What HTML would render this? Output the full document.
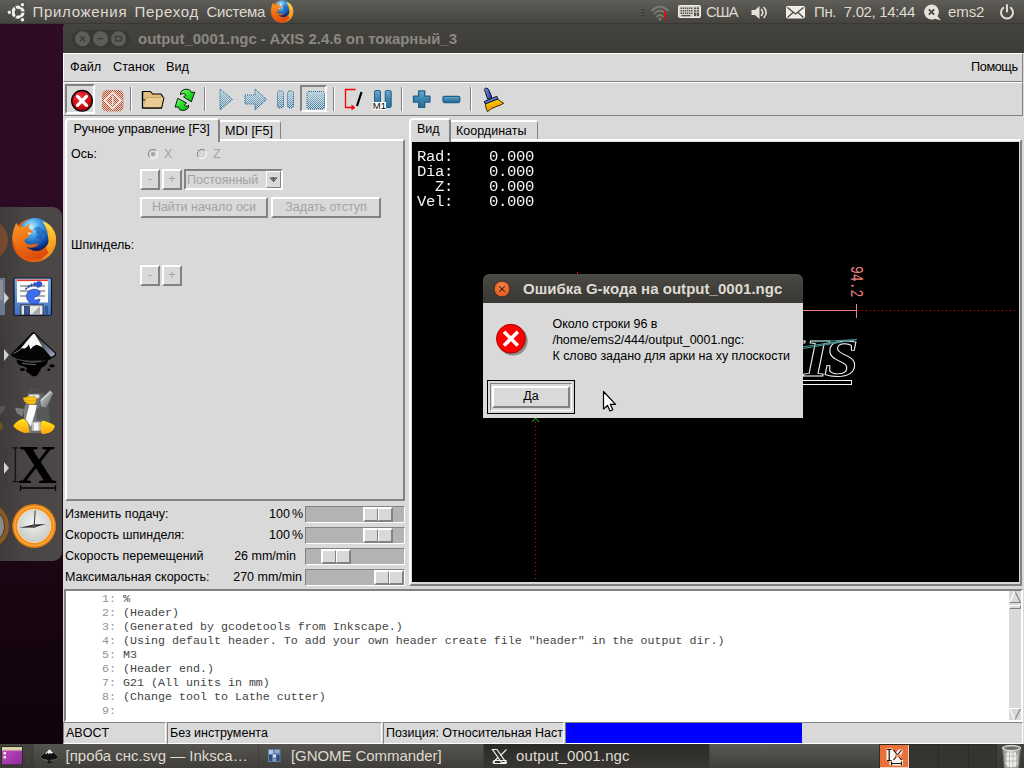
<!DOCTYPE html>
<html lang="ru">
<head>
<meta charset="utf-8">
<title>AXIS</title>
<style>
html,body{margin:0;padding:0;}
body{width:1024px;height:768px;overflow:hidden;position:relative;background:#2c0a22;font-family:"Liberation Sans",sans-serif;font-size:13px;color:#000;}
.abs{position:absolute;}
#desk{left:0;top:24px;width:64px;height:720px;background:linear-gradient(180deg,#2f0b26 0%,#2b0a22 30%,#21081a 60%,#160510 85%,#10030b 100%);}
#toppanel{left:0;top:0;width:1024px;height:24px;background:linear-gradient(180deg,#5f5e59 0%,#504f4a 50%,#45443f 94%,#33322e 100%);color:#dfdbd2;font-size:15px;}
#toppanel span{position:absolute;top:3px;white-space:nowrap;}
#botpanel{left:0;top:744px;width:1024px;height:24px;background:linear-gradient(180deg,#45443f 0%,#3a3935 100%);color:#dfdbd2;font-size:15px;}
#botpanel span{position:absolute;top:3px;white-space:nowrap;}
#titlebar{left:63px;top:24px;width:961px;height:29px;background:linear-gradient(180deg,#45443f 0%,#3c3b37 100%);border-top-left-radius:3px;}
#title{left:75px;top:6px;letter-spacing:-0.03px;color:#8a8880;font-weight:bold;font-size:15px;white-space:nowrap;}
#win{left:63px;top:53px;width:961px;height:691px;background:#d9d9d9;}
.t{position:absolute;white-space:nowrap;}

.m{font-size:12.7px;color:#000;}.tk{font-size:12.5px;color:#000;}
.tk{position:absolute;white-space:nowrap;line-height:14px;}
.dis{color:#a3a3a3;}
.raised{position:absolute;box-sizing:border-box;border:2px solid;border-color:#fff #828282 #828282 #fff;background:#d9d9d9;}
.sunken{position:absolute;box-sizing:border-box;border:2px solid;border-color:#828282 #fff #fff #828282;background:#d9d9d9;}
.btn{text-align:center;font-size:12.5px;color:#a3a3a3;line-height:16px;white-space:nowrap;}
.sep{position:absolute;top:5px;width:1px;height:24px;background:#828282;border-right:1px solid #fff;}
.tab{position:absolute;box-sizing:border-box;border:2px solid;border-color:#fff #828282 #d9d9d9 #fff;border-bottom:none;background:#d9d9d9;border-radius:4px 4px 0 0;font-size:12.5px;white-space:nowrap;}
.radio{width:10px;height:10px;border-radius:50%;border:1px solid;border-color:#828282 #fff #fff #828282;background:#d9d9d9;box-sizing:border-box;}
.radio i{position:absolute;left:2px;top:2px;width:4px;height:4px;border-radius:50%;background:#a3a3a3;}
#dro{position:absolute;left:5px;top:7.6px;margin:0;font-family:"Liberation Mono",monospace;font-size:15.6px;letter-spacing:-0.36px;line-height:17.3px;color:#f4f4f4;transform:scaleY(0.88);transform-origin:0 0;}
#gtext{position:absolute;left:1px;top:1px;margin:0;font-family:"Liberation Mono",monospace;font-size:11.67px;line-height:14px;color:#444;}
#gtext .ln{color:#949494;}
</style>
</head>
<body>
<svg width="0" height="0" style="position:absolute">
<defs>
<radialGradient id="ffglobe" cx="38%" cy="28%" r="75%"><stop offset="0" stop-color="#c9f0ff"/><stop offset="0.350" stop-color="#45a8ea"/><stop offset="0.750" stop-color="#1556b0"/><stop offset="1" stop-color="#0a2268"/></radialGradient>
<linearGradient id="fffox" x1="0" y1="0.600" x2="1" y2="0.400"><stop offset="0" stop-color="#e5550d"/><stop offset="0.450" stop-color="#e8620f"/><stop offset="0.800" stop-color="#f59a1e"/><stop offset="1" stop-color="#fdc535"/></linearGradient>
<linearGradient id="fftail" x1="0" y1="0" x2="0.300" y2="1"><stop offset="0" stop-color="#ffe95a"/><stop offset="0.500" stop-color="#fdc02a"/><stop offset="1" stop-color="#f0871a"/></linearGradient>
<linearGradient id="ffhead" x1="0.200" y1="0" x2="0.600" y2="1"><stop offset="0" stop-color="#f7941e"/><stop offset="0.500" stop-color="#ee6f12"/><stop offset="1" stop-color="#dc4a0c"/></linearGradient>
<symbol id="ff" viewBox="0 0 46 46">
<circle cx="23" cy="23.300" r="22.400" fill="url(#fffox)"/>
<circle cx="24.200" cy="16.900" r="16.500" fill="url(#ffglobe)"/>
<path d="M27 9c2.500 0.500 4 2 4.500 4c2 0 3.500 1.500 3.500 4c-2-1-3.500-0.500-4 1.500c1 2 0.500 4-1.500 5c-1-2-3-2.500-4.500-1.500c0-2 0.500-3.500 2-4.500c-2-1-2.500-3-1.500-5c-1.500 0-2.500 0.500-3.500 1.500c0.500-2.500 2.500-4.500 5-5z" fill="#1b56ad" opacity="0.550"/>
<path d="M18 28c3 3 8 4 13 2.500c2-0.500 3.500-1.500 5-3c-1 4-4 6.500-9 7c-5 0.500-8.500-2-9-6.500z" fill="#0a1f66" opacity="0.850"/>
<path d="M31.500 3.500Q40 6.500 44 14.500Q47.500 23 43.500 32Q40 39 33 42.500Q37 37 36.800 31Q38.500 25 37.300 19Q36.500 11 31.500 3.500Z" fill="url(#fftail)"/>
<path d="M34 8l4 7M36.500 12l3.500 9M38.500 20l1.500 8" stroke="#f49a1a" stroke-width="0.800" fill="none" opacity="0.800"/>
<path d="M4.900 5.700L8 10.500Q11 8.500 14.500 9.500L18.400 6L17.500 11.500Q20.500 12 22.200 15.200L18.500 17.200Q17 18.500 17.600 20.500Q13.500 21 13.200 24.500Q16 28.500 21 27.500Q25 27 27.700 26.300Q26 30 21 30.800Q17 31 15 30Q20 35.500 28 34.500Q32 33.500 34.500 30.500L38 36L30 43L16 43L5 33L0.800 21Q1.500 12 4.900 5.700Z" fill="url(#ffhead)"/>
<path d="M16.500 15.300l4.300 0.300l-2.600 1.700q-1.500 0.200-1.700-2z" fill="#fff1dc"/>
</symbol>
</defs></svg>
<div id="desk" class="abs"></div>
<div id="dock" class="abs" style="left:0;top:207px;width:62px;height:354px;background:linear-gradient(90deg,#3f3b3a 0%,#494544 40%,#4c4847 100%);border-radius:0 9px 9px 0;overflow:hidden">
<svg width="62" height="354" style="position:absolute;left:0;top:0">
<defs>
<linearGradient id="flp" x1="0" y1="0" x2="0" y2="1"><stop offset="0" stop-color="#7fb0e8"/><stop offset="1" stop-color="#3f6fb8"/></linearGradient>
<radialGradient id="clk" cx="50%" cy="40%" r="60%"><stop offset="0" stop-color="#f2f4f1"/><stop offset="1" stop-color="#c6cac5"/></radialGradient>
<linearGradient id="ink" x1="0" y1="0" x2="0" y2="1"><stop offset="0" stop-color="#555"/><stop offset="0.500" stop-color="#111"/><stop offset="1" stop-color="#000"/></linearGradient>
</defs>
<!-- ghost icons at far left -->
<circle cx="-13" cy="33" r="21" fill="#7a4a2c" opacity="0.900"/>
<rect x="-20" y="71" width="25" height="37" fill="#6b7890"/>
<rect x="-20" y="73" width="23" height="20" fill="#8d8d95"/>
<path d="M-10 147l14-18v36z" fill="#3a3838"/>
<path d="M-4 214q5-1 7 5q1 3-4 5h-6z" fill="#6a5a24" opacity="0.900"/>
<path d="M-4 199h9q0 6-6 9h-4z" fill="#575554"/>
<rect x="4.800" y="241" width="1.200" height="34" fill="#3c3939"/><rect x="2" y="240.500" width="6" height="1.200" fill="#3c3939"/><rect x="2" y="274" width="6" height="1.200" fill="#3c3939"/>
<circle cx="-14" cy="319" r="21" fill="none" stroke="#8a5a22" stroke-width="4"/><circle cx="-14" cy="319" r="18" fill="#8d8a86"/>
<!-- little arrows -->
<path d="M4 85v12l5-6z" fill="#cfcfcf"/><path d="M4 142v12l5-6z" fill="#cfcfcf"/><path d="M4 255v12l5-6z" fill="#cfcfcf"/>
<!-- firefox -->
<use href="#ff" x="11" y="10.500" width="46" height="45"/>
<!-- floppy / gnome save -->
<rect x="14" y="71" width="37.500" height="37.500" rx="1.500" fill="url(#flp)" stroke="#10182c" stroke-width="1.200"/>
<rect x="17" y="72.500" width="31" height="23" fill="#fafafa"/>
<rect x="17" y="72.500" width="31" height="1.600" fill="#e23a2a"/>
<path d="M20 79h25M20 84h25M20 89h25" stroke="#333" stroke-width="0.800"/>
<path d="M37 75c3-1 5 0 5 2c0 2-3 4-5 3c-1-1-1-4 0-5z M33.500 76.500c1-1.500 2.500-1 2.500 0.500c0 1.500-1.500 2.500-2.500 1.500z M30.500 77.500c1-1 2-0.500 2 0.500s-1.300 2-2 1.200z M27.800 79c0.800-0.800 1.800-0.400 1.700 0.600c-0.100 1-1.200 1.600-1.700 1z M25.500 81c0.700-0.600 1.500-0.200 1.400 0.600c-0.100 0.800-1 1.200-1.400 0.700z" fill="#2a55d8" stroke="#0a2a9a" stroke-width="0.500"/>
<path d="M29 84c4-3 10-2 11 1c1 3-3 4-5 5c-2 1-1 3 1 3c2 0 2-1.500 3.500-1c1 2-1 5-5 5c-5 0-8-4-8-8c0-2 1-4 2.500-5z" fill="#3e6ef0" stroke="#0a2a9a" stroke-width="0.600"/>
<rect x="21" y="98" width="22" height="10" fill="#e8e8e8" stroke="#10182c" stroke-width="0.800"/>
<rect x="24.500" y="99.500" width="5" height="8" fill="#31579a" stroke="#10182c" stroke-width="0.600"/>
<path d="M32 107l8-8v8z" fill="#a9a9a9"/>
<rect x="45" y="99" width="3" height="9" fill="#31579a"/>
<!-- inkscape -->
<path d="M32 125.800Q33.300 124.300 34.700 125.800L55.800 145.800Q57 147.400 55.500 148.900L49.500 152.800Q44 154.300 40 153.500L30 153.800Q22 153.300 17 151.800L12 149.300Q10.300 147.800 11.600 146.200Z" fill="#050505"/>
<defs><linearGradient id="inkr" x1="0" y1="0" x2="1" y2="1"><stop offset="0" stop-color="#23242a"/><stop offset="0.600" stop-color="#6c7288"/><stop offset="1" stop-color="#a4aabc"/></linearGradient></defs><path d="M34.800 127.300L54.800 146.300Q55.300 147.300 54.300 148.200L51 150L42.500 140.300L40 139L36.500 137.800Z" fill="url(#inkr)"/>
<path d="M33.300 126.800L21 141.300L25 141.600L27.200 139.800L28.700 137.600L30.600 142.200L33 139.500L36.500 137.800L40 139L42.500 140.300L35 127.300Z" fill="#f6f6f6"/>
<path d="M13.500 146.500L20.500 142.500L31.500 128.500" stroke="#cfd2da" stroke-width="0.700" fill="none" opacity="0.800"/>
<path d="M16.500 152.500Q27 156.500 36 155.500Q44 155 48 152.500Q47.500 157.500 44 159.500Q40.500 160.500 40.500 163.500Q38.500 165 38 167.500Q34.500 170.800 31 168.300Q29.500 165.800 27 165.300Q24.800 163.300 27.300 161.300Q25 159.300 20 158.300Q17 157 16.500 152.500Z" fill="#000"/>
<path d="M22 156.300c5 1 10 0.800 14 1.400" stroke="#9a9a9a" stroke-width="1" fill="none" opacity="0.700"/>
<ellipse cx="22.500" cy="162.500" rx="2.600" ry="1.600" fill="#000"/><ellipse cx="52" cy="158.800" rx="2.800" ry="1.600" fill="#000"/><ellipse cx="48.700" cy="162.700" rx="1.500" ry="1.200" fill="#000"/>
<!-- penguin -->
<defs><linearGradient id="pgb" x1="0" y1="0" x2="1" y2="0"><stop offset="0" stop-color="#808182"/><stop offset="0.550" stop-color="#6a6b6c"/><stop offset="1" stop-color="#474849"/></linearGradient><linearGradient id="pgt" x1="0" y1="0" x2="1" y2="1"><stop offset="0" stop-color="#e2e2e2"/><stop offset="0.500" stop-color="#9b9c9d"/><stop offset="1" stop-color="#5c5d5e"/></linearGradient><linearGradient id="pgf" x1="0" y1="0" x2="0" y2="1"><stop offset="0" stop-color="#ffe31a"/><stop offset="1" stop-color="#fca311"/></linearGradient></defs>
<path d="M15 200.500L24 202L22.500 209.700L16.700 206.300Z" fill="#7c7d7e"/>
<path d="M35.800 181Q30 181 28 187L27.500 193L24.500 200Q23.500 206 24 212L26 222L30 226H44L50 222Q52 217 51.500 212L50 200L46 192L43.500 186Q40 181.500 35.800 181Z" fill="url(#pgb)"/>
<path d="M29 185.500Q32 181 36 181Q41 181.500 43 186L29 187.500Z" fill="#48494a"/>
<rect x="28.300" y="187.300" width="11.200" height="4.200" rx="2" fill="#e4e6e8" stroke="#8e9092" stroke-width="0.700"/><path d="M33.800 187.500v4" stroke="#8e9092" stroke-width="0.700"/>
<path d="M29.200 198H36.700L35 206.300L30.800 219.700L25.800 212Z" fill="#fbfbfb"/>
<path d="M40 193L50 183L53.300 186.300L46.700 200.500H40.800Z" fill="url(#pgt)" stroke="#555657" stroke-width="0.500"/>
<path d="M41 193.500L51 185" stroke="#f4f4f4" stroke-width="0.900"/>
<path d="M36.500 203L41 199L48 203L50 214L44 216L37 213Z" fill="#58595a"/>
<rect x="31.700" y="214.700" width="9.100" height="9" fill="#bfc0c1"/><rect x="34" y="216" width="4.500" height="7.500" fill="#f6f6f6"/>
<path d="M23 191Q29 188.300 36 190.300Q37.300 195 34 197.300Q28 197.800 24.500 194.500Z" fill="#fcc21a" stroke="#c88a08" stroke-width="0.500"/><path d="M24.500 193Q30 195 36.300 193.500" stroke="#d8920a" stroke-width="0.600" fill="none"/>
<path d="M13.300 218.800Q17 213.500 23.300 211.800Q27.500 214 28.300 218L29.600 225.500Q25 226.500 21.700 225Q16 223 13.300 218.800Z" fill="url(#pgf)"/>
<path d="M41.700 213.800Q44 213.500 46.700 214.700Q52 216 55 218.800Q54 223.500 50 225.500Q45 227.500 41.700 226.700Q40 223 40.400 219.700Z" fill="url(#pgf)"/>
<!-- X icon -->
<rect x="14.700" y="240.500" width="1.400" height="34.500" fill="#151515"/><rect x="12.300" y="240.300" width="6.200" height="1.300" fill="#151515"/><rect x="12.300" y="274" width="6.200" height="1.300" fill="#151515"/>
<text x="18" y="276" font-family="Liberation Serif, serif" font-weight="bold" font-size="54" fill="#000" textLength="39" lengthAdjust="spacingAndGlyphs">X</text>
<path d="M20.500 281h35M20.500 278.300v5.500M55.500 278.300v5.500" stroke="#000" stroke-width="1.300" fill="none"/>
<!-- clock -->
<circle cx="34.200" cy="319" r="21.800" fill="#f28a1c"/><circle cx="34.200" cy="319" r="21.300" fill="none" stroke="#d87408" stroke-width="1"/><circle cx="34.200" cy="319" r="19.500" fill="none" stroke="#f9a840" stroke-width="1.500"/>
<circle cx="34.200" cy="319" r="16.600" fill="url(#clk)" stroke="#fbd9a8" stroke-width="1"/>
<path d="M34.200 319l1-15.500" stroke="#3a3a3a" stroke-width="1"/><path d="M19.200 320.800L34 317.500L45.800 317L34.400 320.600Z" fill="#2c2c2c"/><circle cx="34.200" cy="319" r="2" fill="#555"/>
</svg>
</div>
<div id="toppanel" class="abs">
<svg class="abs" style="left:6px;top:1px" width="24" height="22"><circle cx="12" cy="11.200" r="5" fill="none" stroke="#f2f1ec" stroke-width="3.200"/><g stroke="#504f4a" stroke-width="1.300"><path d="M12 11.200L22 11.200M12 11.200L7 2.500M12 11.200L7 19.900"/></g><g fill="#f2f1ec" stroke="#504f4a" stroke-width="1.100"><circle cx="3.300" cy="11.200" r="2.300"/><circle cx="16.400" cy="3.700" r="2.300"/><circle cx="16.400" cy="18.700" r="2.300"/></g></svg>
<span style="left:32.5px;letter-spacing:0.7px">Приложения</span>
<span style="left:134.5px;letter-spacing:0.7px">Переход</span>
<span style="left:206.5px;letter-spacing:-0.25px">Система</span>
<svg class="abs" style="left:270px;top:0" width="24" height="23"><use href="#ff" x="0" y="0" width="24" height="23"/></svg>
<!-- applet handle -->
<svg class="abs" style="left:641px;top:8px" width="5" height="10"><path d="M0 1.500h4M0 4.500h4M0 7.500h4" stroke="#3a3935" stroke-width="1"/></svg>
<!-- wifi -->
<svg class="abs" style="left:650px;top:4px" width="20" height="18"><g fill="none" stroke="#7d7b75" stroke-width="1.800" stroke-linecap="round"><path d="M2 6.500c5-5 11-5 16 0"/><path d="M4.500 9.500c3.500-3.500 7.500-3.500 11 0"/><path d="M7 12.500c2-2 4-2 6 0"/></g><circle cx="10" cy="15" r="1.500" fill="#7d7b75"/><rect x="14" y="7" width="2" height="6" fill="#e01010"/><rect x="14" y="14" width="2" height="2" fill="#e01010"/></svg>
<!-- keyboard -->
<svg class="abs" style="left:678px;top:5px" width="24" height="14"><rect x="0.500" y="0.500" width="22" height="12" rx="1" fill="#d8d6cf" stroke="#efede6"/><g fill="#55534e"><rect x="2.500" y="2.500" width="12" height="1.500"/><rect x="2.500" y="5" width="12" height="1.500"/><rect x="2.500" y="7.500" width="12" height="1.500"/><rect x="3.500" y="10" width="9" height="1.300"/><rect x="16" y="2.500" width="5" height="1.500"/><rect x="16" y="5" width="5" height="1.500"/><rect x="16" y="7.500" width="5" height="3.500"/></g><g stroke="#d8d6cf" stroke-width="0.700"><path d="M4.500 2v8M6.500 2v8M8.500 2v8M10.500 2v8M12.500 2v8M18.500 2v9"/></g><rect x="19" y="1.500" width="2" height="1" fill="#6fbf4a"/></svg>
<span style="left:706px;letter-spacing:-1.100px">США</span>
<!-- speaker -->
<svg class="abs" style="left:751px;top:5px" width="18" height="15"><path d="M0.500 5h3.500l4.500-4v13l-4.500-4h-3.500z" fill="#e6e3da"/><path d="M10.500 4.500c1.500 1.800 1.500 4.200 0 6" stroke="#e6e3da" stroke-width="1.600" fill="none" stroke-linecap="round"/><path d="M13 2.500c2.800 3 2.800 7 0 10" stroke="#e6e3da" stroke-width="1.600" fill="none" stroke-linecap="round"/></svg>
<!-- mail -->
<svg class="abs" style="left:786px;top:6px" width="20" height="13"><rect x="0.500" y="0.500" width="18" height="11.500" rx="1" fill="#eeebe2" stroke="#f6f4ee"/><path d="M1.500 1.500l8 6.500l8-6.500M1.500 11.500l6-5.500M17.500 11.500l-6-5.500" stroke="#45443f" stroke-width="1.200" fill="none"/></svg>
<span style="left:814px;letter-spacing:-0.35px;white-space:pre">Пн.  7.02, 14:44</span>
<!-- chat bubble -->
<svg class="abs" style="left:923px;top:4px" width="20" height="17"><path d="M8.500 0.500a7.500 7.500 0 1 0 3.500 14.200l6 1.500l-3.500-4a7.500 7.500 0 0 0-6-11.700z" fill="#e6e3da"/><path d="M5.800 5.300l5.400 5.400M11.200 5.300l-5.400 5.400" stroke="#45443f" stroke-width="1.700"/></svg>
<span style="left:948px;letter-spacing:-0.1px">ems2</span>
<!-- power -->
<svg class="abs" style="left:999px;top:4px" width="16" height="16"><path d="M4.300 3.800a6 6 0 1 0 7.400 0" fill="none" stroke="#e6e3da" stroke-width="1.900" stroke-linecap="round"/><path d="M8 1v6.500" stroke="#e6e3da" stroke-width="1.900" stroke-linecap="round"/></svg>
</div>
<div id="titlebar" class="abs"><svg class="abs" style="left:8px;top:5px" width="60" height="20"><rect x="1" y="1" width="58" height="18" rx="9" fill="#393834"/><g fill="#5f5d57"><circle cx="11.500" cy="9.700" r="7.500"/><circle cx="29.500" cy="9.700" r="7.500"/><circle cx="47.500" cy="9.700" r="7.500"/></g><g stroke="#3c3b37" stroke-width="1.300" fill="none"><path d="M9 7.200l5 5M14 7.200l-5 5"/><path d="M26.500 9.700h6"/><rect x="44.500" y="7.500" width="6" height="4.500"/></g></svg><div id="title" class="abs">output_0001.ngc - AXIS 2.4.6 on токарный_3</div></div>
<div id="win" class="abs">
<!-- menubar -->
<div class="abs" style="left:0;top:0;width:960px;height:29px;border-top:1px solid #fff;border-bottom:1px solid #828282;border-right:1px solid #828282;border-left:1px solid #fff;box-sizing:border-box"></div>
<div class="t m" style="left:7px;top:7px">Файл</div>
<div class="t m" style="left:50px;top:7px">Станок</div>
<div class="t m" style="left:103px;top:7px">Вид</div>
<div class="t m" style="left:908px;top:7px;letter-spacing:-0.4px">Помощь</div>
<!-- toolbar -->
<div class="abs" style="left:0;top:29px;width:960px;height:34px;border-top:1px solid #fff;border-bottom:1px solid #828282;border-right:1px solid #828282;border-left:1px solid #fff;box-sizing:border-box"></div>
<div id="toolbar" class="abs" style="left:0;top:29px;width:961px;height:34px">
<div class="sunken" style="left:2px;top:2px;width:30px;height:30px"></div>
<div class="sunken" style="left:237px;top:3px;width:27px;height:27px"></div>
<div class="sep" style="left:67px"></div><div class="sep" style="left:141px"></div><div class="sep" style="left:270px"></div><div class="sep" style="left:338px"></div><div class="sep" style="left:407px"></div>
<svg width="961" height="34" style="position:absolute;left:0;top:0">
<defs>
<pattern id="stp" width="2" height="2" patternUnits="userSpaceOnUse"><rect width="2" height="2" fill="#fff"/><rect x="0" y="0" width="1" height="1" fill="#000"/><rect x="1" y="1" width="1" height="1" fill="#000"/></pattern>
<mask id="stm"><rect width="961" height="34" fill="url(#stp)"/></mask>
<radialGradient id="rg" cx="40%" cy="30%" r="75%"><stop offset="0" stop-color="#f0303a"/><stop offset="0.600" stop-color="#d40f18"/><stop offset="1" stop-color="#a80008"/></radialGradient>
<linearGradient id="bl" x1="0" y1="0" x2="0" y2="1"><stop offset="0" stop-color="#a6d4e4"/><stop offset="1" stop-color="#2f78a4"/></linearGradient>
<linearGradient id="bl2" x1="0" y1="0" x2="0" y2="1"><stop offset="0" stop-color="#6fabcb"/><stop offset="0.500" stop-color="#3f84ad"/><stop offset="1" stop-color="#2c6f99"/></linearGradient>
<linearGradient id="gr" x1="0" y1="0" x2="1" y2="1"><stop offset="0" stop-color="#8cff8c"/><stop offset="0.450" stop-color="#2ee02e"/><stop offset="1" stop-color="#06b406"/></linearGradient>
</defs>
<!-- estop -->
<circle cx="19" cy="18.800" r="10.300" fill="url(#rg)" stroke="#000" stroke-width="1.300"/>
<path d="M14.500 14.300l9 9M23.500 14.300l-9 9" stroke="#fff" stroke-width="3.200" stroke-linecap="round"/>
<!-- power (disabled, stippled) -->
<g mask="url(#stm)"><rect x="39" y="8" width="21.500" height="21.500" rx="5" fill="#c44a26"/></g>
<path d="M49.700 10.500l8 8l-8 8l-8-8z" fill="none" stroke="#f6ece6" stroke-width="2.200" opacity="0.900"/>
<path d="M49.700 14v9" stroke="#f6ece6" stroke-width="1.600" opacity="0.800"/>
<!-- folder -->
<path d="M79.500 9.500h8l2 2.500h8.500l2 3v3h-20.500z" fill="#e3bd7c" stroke="#000" stroke-width="1.200" stroke-linejoin="round"/>
<path d="M79.500 9.500v16.500h19" fill="none" stroke="#000" stroke-width="1.300"/>
<path d="M83 15.500h18l-2.500 11h-18.500z" fill="#eccb92" stroke="#b9975e" stroke-width="0.600"/>
<path d="M98.500 26.500l2.500-11" stroke="#000" stroke-width="1"/>
<path d="M80 26h18.500" stroke="#000" stroke-width="1.300"/>
<!-- reload -->
<path d="M117.300 12.400Q117.200 9.500 120 8Q123.500 6.300 126.500 7.900Q128 9 128.500 10.400L131.800 10.200L128.300 19.800L120.500 14.900L122.600 13.300Q122.600 12 121.500 11.700Q119.500 11.500 117.300 12.400z" fill="url(#gr)" stroke="#0a1e0a" stroke-width="1" stroke-linejoin="round"/>
<path d="M125.900 23.300Q126 26.200 123.200 27.700Q119.700 29.400 116.700 27.800Q115.900 26.500 115.400 25L112.100 25L114.800 16.300L123.600 21.100L121.500 22.700Q121.500 24 122.600 24.300Q124 24.300 125.900 23.300z" fill="url(#gr)" stroke="#0a1e0a" stroke-width="1" stroke-linejoin="round"/>
<!-- play / step / pause / stop (stippled) -->
<g mask="url(#stm)">
<path d="M157 7l12.500 10.500l-12.500 10.500z" fill="url(#bl)" />
<path d="M182 13h10v-6l11.500 10.500l-11.500 10.500v-6h-10z" fill="url(#bl)"/>
<rect x="214.500" y="9" width="6" height="17" rx="2" fill="url(#bl)"/>
<rect x="224.500" y="9" width="6" height="17" rx="2" fill="url(#bl)"/>
<rect x="244" y="9.500" width="17.500" height="17.500" rx="2" fill="url(#bl)"/>
</g>
<g fill="none" stroke="#1f5f8c" stroke-width="1" stroke-dasharray="1 1">
<path d="M157 7l12.500 10.500l-12.500 10.500z"/>
<path d="M182 13h10v-6l11.500 10.500l-11.500 10.500v-6h-10z"/>
<rect x="214.500" y="9" width="6" height="17" rx="2"/>
<rect x="224.500" y="9" width="6" height="17" rx="2"/>
<rect x="244" y="9.500" width="17.500" height="17.500" rx="2"/>
</g>
<!-- red bracket and slash -->
<path d="M292.500 7.500h-10v18h7.500" fill="none" stroke="#ff0000" stroke-width="1.300"/>
<path d="M292.500 25.500l-4-3v6z" fill="#ff0000"/>
<path d="M298.500 10l-4.500 14" stroke="#000" stroke-width="2.200"/>
<!-- M1 -->
<rect x="311.500" y="8.500" width="6" height="17" rx="1.500" fill="url(#bl2)" stroke="#1f5f8c"/>
<rect x="322.200" y="8.500" width="6" height="17" rx="1.500" fill="url(#bl2)" stroke="#1f5f8c"/>
<rect x="309.500" y="20" width="13.500" height="8" fill="#fff"/>
<text x="309.800" y="27.300" font-family="Liberation Sans, sans-serif" font-size="9.500" fill="#000">M1</text>
<!-- plus minus -->
<path d="M355.70 8.90L361.70 8.90L361.70 14.10L366.90 14.10L366.90 20.10L361.70 20.10L361.70 25.30L355.70 25.30L355.70 20.10L350.50 20.10L350.50 14.10L355.70 14.10z" fill="url(#bl2)" stroke="#1f5f8c" stroke-width="1.300" stroke-linejoin="round"/>
<rect x="380" y="14.300" width="16.800" height="6.200" rx="1.500" fill="url(#bl2)" stroke="#1f5f8c" stroke-width="1.300"/>
<!-- broom -->
<defs><linearGradient id="brh" x1="0" y1="0" x2="1" y2="0"><stop offset="0" stop-color="#8da2e8"/><stop offset="0.500" stop-color="#4466c4"/><stop offset="1" stop-color="#1e3a8c"/></linearGradient><linearGradient id="bry" x1="0" y1="0" x2="0.400" y2="1"><stop offset="0" stop-color="#ffe100"/><stop offset="0.500" stop-color="#f7b800"/><stop offset="1" stop-color="#e88e00"/></linearGradient></defs>
<path d="M421.400 7.300Q422.200 5.600 424 6.200Q425.400 6.800 426 8.300L428.900 15.300L424.700 17.300z" fill="url(#brh)" stroke="#10142a" stroke-width="1" stroke-linejoin="round"/>
<path d="M422.400 21.500L434.300 17L440.700 21.300L437 23.300L434 24.200L431 25.600L428.500 26.600L426.500 28.300L424.300 29.500L423 26z" fill="url(#bry)" stroke="#241a04" stroke-width="0.900" stroke-linejoin="round"/>
<path d="M421.200 19.600L433.800 14.300L435 17L422.300 21.900z" fill="#5a78cc" stroke="#10142a" stroke-width="1" stroke-linejoin="round"/>
</svg>
</div>
<!-- left notebook -->
<div id="leftnb" class="abs" style="left:0;top:63px;width:345px;height:390px">
<div class="raised" style="left:2px;top:23px;width:340px;height:362px"></div>
<div class="tab" style="left:157px;top:4px;width:61px;height:19px;border-right-width:1px;border-left-width:0;border-radius:0 4px 0 0"><span class="tk" style="left:5px;top:2px">MDI [F5]</span></div>
<div class="tab" style="left:2px;top:2px;width:155px;height:24px"><span class="tk" style="left:6.5px;top:2px;letter-spacing:-0.12px">Ручное управление [F3]</span></div>
<div class="tk" style="left:8px;top:31px">Ось:</div>
<div class="abs radio" style="left:85px;top:33px"><i></i></div>
<div class="tk dis" style="left:101px;top:31px">X</div>
<div class="abs radio" style="left:134px;top:33px"></div>
<div class="tk dis" style="left:150px;top:31px">Z</div>
<div class="raised btn" style="left:77px;top:53px;width:20px;height:21px">-</div>
<div class="raised btn" style="left:99px;top:53px;width:20px;height:21px">+</div>
<div class="sunken" style="left:121px;top:53px;width:99px;height:21px"><span class="tk dis" style="left:1px;top:2px">Постоянный</span>
<div class="raised" style="left:80px;top:0px;width:15px;height:17px;border-width:1px"><svg width="13" height="15" style="position:absolute;left:0;top:0"><path d="M2.500 5.500h8l-4 4.500z" fill="#222"/><path d="M4 5.500l2.500 2.800l2.500-2.800" stroke="#d9d9d9" stroke-width="0.900" fill="none"/></svg></div></div>
<div class="raised btn" style="left:77px;top:81px;width:128px;height:21px">Найти начало оси</div>
<div class="raised btn" style="left:208px;top:81px;width:110px;height:21px">Задать отступ</div>
<div class="tk" style="left:8px;top:122px">Шпиндель:</div>
<div class="raised btn" style="left:77px;top:149px;width:20px;height:21px">-</div>
<div class="raised btn" style="left:99px;top:149px;width:20px;height:21px">+</div>
</div>
<!-- right notebook -->
<div id="rightnb" class="abs" style="left:345px;top:63px;width:616px;height:470px">
<div class="raised" style="left:1px;top:23px;width:613px;height:447px"></div>
<div class="tab" style="left:43px;top:4px;width:87px;height:19px;border-right-width:1px;border-left-width:0;border-radius:0 4px 0 0"><span class="tk" style="left:5px;top:2px">Координаты</span></div>
<div class="tab" style="left:1px;top:2px;width:42px;height:24px"><span class="tk" style="left:6px;top:2px">Вид</span></div>
<div id="canvas" class="abs" style="left:4px;top:26px;width:607px;height:440px;background:#000;overflow:hidden">
<pre id="dro">Rad:    0.000
Dia:    0.000
  Z:    0.000
Vel:    0.000</pre>
<svg width="607" height="440" style="position:absolute;left:0;top:0">
<line x1="123.500" y1="276" x2="123.500" y2="437" stroke="#ff0000" stroke-width="1" stroke-dasharray="1 3"/>
<line x1="446" y1="168.500" x2="606" y2="168.500" stroke="#ff0000" stroke-width="1" stroke-dasharray="1 3"/>
<path d="M120 280l3.500-4l3.500 4" stroke="#20c020" fill="none" stroke-width="1"/>
<line x1="160" y1="168.500" x2="444" y2="168.500" stroke="#f08080" stroke-width="1"/>
<line x1="444.500" y1="162" x2="444.500" y2="176" stroke="#f08080" stroke-width="1"/>
<text transform="translate(438.700,124) rotate(90)" font-family="Liberation Mono, monospace" font-size="18" fill="#f08080" textLength="31.500" lengthAdjust="spacingAndGlyphs">94.2</text>
<text transform="translate(446.500,233.500) scale(1.170,1)" text-anchor="end" font-family="Liberation Serif, serif" font-style="italic" font-weight="bold" font-size="53" fill="none" stroke="#f4f4f4" stroke-width="0.900">AXI<tspan dx="-3.500">S</tspan></text>
<rect x="300.500" y="238.500" width="139" height="4" fill="none" stroke="#f4f4f4" stroke-width="1"/>
<path d="M391 206.500L445 197.500M391 204.800L428 199.500M400 200L445 197.500" fill="none" stroke="#4f9a9a" stroke-width="1"/>
<rect x="165" y="130" width="1" height="3" fill="#ff0000"/>
</svg>
</div>
</div>
<!-- sliders -->
<div id="sliders" class="abs" style="left:0;top:450px;width:345px;height:84px"><div class="tk" style="left:2px;top:4px">Изменить подачу:</div><div class="tk" style="right:105px;top:4px;word-spacing:-1.5px">100 %</div><div class="sunken" style="left:242px;top:3px;width:100px;height:17px;background:#b3b3b3;border-width:1px"></div><div class="raised" style="left:300px;top:4px;width:30px;height:15px;border-width:1px"></div><div class="raised" style="left:301px;top:5px;width:14px;height:13px;border-width:1px"></div><div class="raised" style="left:315px;top:5px;width:14px;height:13px;border-width:1px"></div><div class="tk" style="left:2px;top:25px">Скорость шпинделя:</div><div class="tk" style="right:105px;top:25px;word-spacing:-1.5px">100 %</div><div class="sunken" style="left:242px;top:24px;width:100px;height:17px;background:#b3b3b3;border-width:1px"></div><div class="raised" style="left:300px;top:25px;width:30px;height:15px;border-width:1px"></div><div class="raised" style="left:301px;top:26px;width:14px;height:13px;border-width:1px"></div><div class="raised" style="left:315px;top:26px;width:14px;height:13px;border-width:1px"></div><div class="tk" style="left:2px;top:46px">Скорость перемещений</div><div class="tk" style="right:112px;top:46px">26 mm/min</div><div class="sunken" style="left:242px;top:45px;width:100px;height:17px;background:#b3b3b3;border-width:1px"></div><div class="raised" style="left:258px;top:46px;width:30px;height:15px;border-width:1px"></div><div class="raised" style="left:259px;top:47px;width:14px;height:13px;border-width:1px"></div><div class="raised" style="left:273px;top:47px;width:14px;height:13px;border-width:1px"></div><div class="tk" style="left:2px;top:67px">Максимальная скорость:</div><div class="tk" style="right:106px;top:67px">270 mm/min</div><div class="sunken" style="left:242px;top:66px;width:100px;height:17px;background:#b3b3b3;border-width:1px"></div><div class="raised" style="left:311px;top:67px;width:30px;height:15px;border-width:1px"></div><div class="raised" style="left:312px;top:68px;width:14px;height:13px;border-width:1px"></div><div class="raised" style="left:326px;top:68px;width:14px;height:13px;border-width:1px"></div></div>
<!-- gcode text -->
<div id="gcode" class="abs sunken" style="left:1px;top:536px;width:959px;height:133px;background:#fff;position:absolute"><pre id="gtext"><span class="ln">     1: </span>%
<span class="ln">     2: </span>(Header)
<span class="ln">     3: </span>(Generated by gcodetools from Inkscape.)
<span class="ln">     4: </span>(Using default header. To add your own header create file &quot;header&quot; in the output dir.)
<span class="ln">     5: </span>M3
<span class="ln">     6: </span>(Header end.)
<span class="ln">     7: </span>G21 (All units in mm)
<span class="ln">     8: </span>(Change tool to Lathe cutter)
<span class="ln">     9: </span></pre></div><div id="sb" class="abs" style="left:946px;top:538px;width:12px;height:129px;background:#d9d9d9">
<svg width="12" height="129" style="position:absolute;left:0;top:0">
<path d="M6 0.500L0.500 11.500h11z" fill="#d9d9d9"/><path d="M6 0.500L11.500 11.500H0.500" stroke="#828282" fill="none" stroke-width="1.200"/><path d="M6 0.500L0.500 11.500" stroke="#fff" fill="none" stroke-width="1.200"/>
<rect x="0" y="14" width="12" height="4" fill="#d9d9d9"/><path d="M0.500 17.500h11v-3.500" stroke="#828282" fill="none"/><path d="M0.500 17.500v-3h11" stroke="#fff" fill="none"/>
<path d="M6 128.500L0.500 117.500h11z" fill="#d9d9d9"/><path d="M6 128.500L11.500 117.500" stroke="#828282" fill="none" stroke-width="1.200"/><path d="M6 128.500L0.500 117.500H11.500" stroke="#fff" fill="none" stroke-width="1.200"/>
</svg></div>
<!-- status -->
<div id="status" class="abs" style="left:0;top:669px;width:961px;height:22px">
<div class="sunken" style="left:0;top:0;width:103px;height:22px;border-width:1px"><span class="tk" style="left:2px;top:3px">ABOCT</span></div>
<div class="sunken" style="left:104px;top:0;width:215px;height:22px;border-width:1px"><span class="tk" style="left:2px;top:3px">Без инструмента</span></div>
<div class="sunken" style="left:320px;top:0;width:181px;height:22px;border-width:1px"><span class="tk" style="left:2px;top:3px">Позиция: Относительная Наст</span></div>
<div class="sunken" style="left:502px;top:0;width:458px;height:22px;border-width:1px"></div><div class="abs" style="left:503px;top:1px;width:236px;height:20px;background:#0000ff"></div>
</div>
</div>
<div id="dlg" class="abs" style="left:483px;top:274px;width:320px;height:144px">
<div class="abs" style="left:0;top:0;width:320px;height:29px;background:linear-gradient(180deg,#4b4a45 0%,#3e3d39 60%,#3a3935 100%);border-radius:6px 6px 0 0"></div>
<svg class="abs" style="left:10px;top:6px" width="18" height="18"><defs><radialGradient id="cg" cx="50%" cy="35%" r="65%"><stop offset="0" stop-color="#f58450"/><stop offset="1" stop-color="#e2541a"/></radialGradient></defs><circle cx="9" cy="9" r="8" fill="url(#cg)" stroke="#3a2a22" stroke-width="1"/><path d="M6.300 6.300l5.400 5.400M11.700 6.300l-5.400 5.400" stroke="#4a1c0c" stroke-width="1.100"/></svg>
<div class="t" style="left:40px;top:6px;font-weight:bold;font-size:15px;color:#dfdbd2;letter-spacing:0.03px">Ошибка G-кода на output_0001.ngc</div>
<div class="abs" style="left:0;top:29px;width:320px;height:115px;background:#d9d9d9"></div>
<svg class="abs" style="left:11px;top:48px" width="36" height="36"><defs><radialGradient id="eg" cx="40%" cy="30%" r="70%"><stop offset="0" stop-color="#ff4040"/><stop offset="1" stop-color="#e00000"/></radialGradient></defs><circle cx="18.800" cy="18.700" r="14.800" fill="#8a8a8a"/><circle cx="16.900" cy="16.700" r="14.400" fill="#ff0000" stroke="#a80000" stroke-width="1"/><path d="M10 9.800l13.800 13.800M23.800 9.800l-13.800 13.800" stroke="#fff" stroke-width="3.600"/></svg>
<div class="tk" style="left:69.5px;top:42px;line-height:16px;white-space:pre;letter-spacing:-0.05px">Около строки 96 в
/home/ems2/444/output_0001.ngc:
К слово задано для арки на xy плоскости</div>
<div class="sunken" style="left:4px;top:106px;width:88px;height:34px;border-width:1px;border-color:#000 #000 #000 #000;background:#d9d9d9"></div>
<div class="sunken" style="left:7px;top:109px;width:82px;height:28px;border-width:1px;border-color:#828282 #fff #fff #828282;background:#d9d9d9"></div>
<div class="raised btn" style="left:9px;top:112px;width:78px;height:22px;color:#000;line-height:17px">Да</div>
</div>
<svg id="cursor" class="abs" style="left:600px;top:388px" width="20" height="26"><path d="M3.500 3.500V21L7.500 17.500L10 23L12.800 21.800L10.300 16.300H15.500Z" fill="#fff" stroke="#000" stroke-width="1.200" stroke-linejoin="round"/></svg>
<div id="botpanel" class="abs">
<div class="abs" style="left:34px;top:0;width:224px;height:24px;background:linear-gradient(180deg,#55544f 0%,#4a4944 50%,#3f3e3a 100%)"></div>
<div class="abs" style="left:259px;top:0;width:224px;height:24px;background:linear-gradient(180deg,#55544f 0%,#4a4944 50%,#3f3e3a 100%)"></div>
<div class="abs" style="left:484px;top:0;width:225px;height:24px;background:linear-gradient(180deg,#2b2a27 0%,#33322f 60%,#383733 100%)"></div>
<div class="abs" style="left:710px;top:0;width:170px;height:24px;background:linear-gradient(180deg,#5b5a55 0%,#4c4b46 50%,#403f3b 100%)"></div>
<!-- show desktop -->
<svg class="abs" style="left:0;top:1px" width="24" height="22"><defs><linearGradient id="sd" x1="0" y1="0" x2="1" y2="1"><stop offset="0" stop-color="#c24fc0"/><stop offset="1" stop-color="#8e2a9a"/></linearGradient></defs><rect x="1" y="1" width="22" height="19.500" rx="2" fill="#2a2926"/><rect x="2" y="2" width="20" height="17.500" rx="1" fill="url(#sd)"/><rect x="2" y="2" width="20" height="3.500" fill="#d9d2a6"/><rect x="3.500" y="7" width="2.500" height="2.500" fill="#f0e8f0"/><rect x="3.500" y="11" width="2.500" height="2.500" fill="#f0e8f0"/></svg>
<svg class="abs" style="left:27px;top:6px" width="4" height="12"><path d="M0 1.500h3M0 4.500h3M0 7.500h3M0 10.500h3" stroke="#4b4a45" stroke-width="1"/></svg>
<!-- inkscape small -->
<svg class="abs" style="left:40px;top:3px" width="19" height="18"><path d="M9.500 0.800l8.500 8.700c0.500 0.600 0.400 1.200-0.200 1.600l-2.300 1.400c-2 0.600-3 0.500-4.300 0.400l-1 1.800c-0.800 0.400-1.800 0.400-2.400-0.200l-0.800-1.600c-1.600 0-3-0.300-4.300-0.800l-2-1.200c-0.500-0.500-0.500-1.100 0-1.600z" fill="#111" stroke="#7d7c78" stroke-width="0.700"/><path d="M9.500 2l4 4.200l-1.400-0.200l-0.900 1l-1.300-1.300l-1 1.900l-1.100-2.100l-1.500 1.500l-1.400-0.300z" fill="#eee"/><path d="M5 13.500c2 1 6 1 9 0c-1 1-2 1-1.500 2c-1 0.800-2 0.300-2.500 1.300c-1.500 0.500-2.500-0.300-3-1c0.800-0.800 0-1.500-2-2.300z" fill="#111" stroke="#6d6c68" stroke-width="0.400"/></svg>
<span style="left:65.5px;letter-spacing:0px">[проба снс.svg — Inksca…</span>
<!-- gnome commander icon -->
<svg class="abs" style="left:268px;top:5px" width="13" height="14"><rect x="0" y="0" width="12.500" height="13" fill="#5f7fb2"/><rect x="1" y="1" width="4" height="4" fill="#b8c8e4"/><rect x="6.500" y="1" width="5" height="3" fill="#9ab"/><rect x="1" y="6" width="3" height="6" fill="#2e4a80"/><rect x="5" y="5.500" width="3" height="3" fill="#d9e2f2"/><rect x="8.500" y="6" width="3" height="6" fill="#2e4a80"/><rect x="5" y="9.500" width="3" height="3" fill="#89a"/></svg>
<span style="left:291px;letter-spacing:-0.07px">[GNOME Commander]</span>
<!-- X icon -->
<svg class="abs" style="left:491px;top:4px" width="18" height="17"><g fill="none" stroke="#f2f1ec" stroke-width="1.200"><path d="M1.500 1.500h4.500l9 13h-4.500z"/><path d="M15.500 1.500l-6 6M7 9.500l-5.500 5.500"/><path d="M3 12.500h12v3h-12z"/></g></svg>
<span style="left:516px;letter-spacing:0.13px">output_0001.ngc</span>
<!-- workspace switcher -->
<div class="abs" style="left:879px;top:0;width:118px;height:24px;background:#2d2c29"></div>
<div class="abs" style="left:880px;top:1px;width:29px;height:23px;background:#e8713a;box-shadow:inset -1px -1px 0 #f6d2c0"></div>
<div class="abs" style="left:910px;top:1px;width:28px;height:23px;background:#353431"></div>
<div class="abs" style="left:939px;top:1px;width:29px;height:23px;background:#353431"></div>
<div class="abs" style="left:969px;top:1px;width:27px;height:23px;background:#353431"></div>
<svg class="abs" style="left:884px;top:3px" width="22" height="20"><path d="M2.500 1.500h6v2h1.500l2 2l2.500-3h4v3l-1.500 2v5.500h2v5.500h-13.500v-4.500h-3z" fill="#fbf3ee"/><g fill="none" stroke="#141311" stroke-width="1.200"><path d="M3 2.500h4.500M3 13.500h4.500M5.200 2.500v11"/><path d="M9.500 3l8 10M17.500 3l-8 10"/><path d="M7.500 16.500h10M7.500 14.500v4M17.500 14.500v4"/></g><rect x="11" y="7.500" width="7.500" height="2.500" fill="#f08a5c"/></svg>
<!-- trash -->
<svg class="abs" style="left:1000px;top:0" width="24" height="24"><defs><linearGradient id="tr" x1="0" y1="0" x2="1" y2="0"><stop offset="0" stop-color="#8f8f8c"/><stop offset="0.450" stop-color="#dededb"/><stop offset="1" stop-color="#8a8a87"/></linearGradient></defs><path d="M2.500 4h18l-1.800 20h-14.400z" fill="url(#tr)" stroke="#6a6a67" stroke-width="0.700"/><ellipse cx="11.500" cy="4" rx="9.300" ry="2.600" fill="#a9a9a5" stroke="#d8d8d4" stroke-width="1"/><ellipse cx="11.500" cy="4.300" rx="7.200" ry="1.500" fill="#6b6a66"/><path d="M5 11l3-3l3 2l4-2l3 3l-1 5l1 4l-3 3h-7l-3-4l1-4z" fill="#f3f3f1" opacity="0.850"/><path d="M6 8v15M9.500 8v16M13 8v16M16.500 8v15M4 12h15M4.300 17h14.400" stroke="#8c8c88" stroke-width="0.600" opacity="0.800"/></svg>
</div>
</body>
</html>
